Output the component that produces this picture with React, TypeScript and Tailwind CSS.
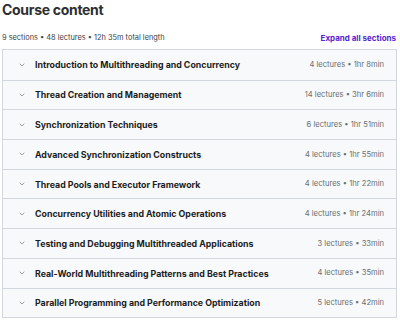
import React from 'react';
import { ChevronDown } from 'lucide-react';

const sections = [
  { title: 'Introduction to Multithreading and Concurrency', meta: '4 lectures • 1hr 8min' },
  { title: 'Thread Creation and Management', meta: '14 lectures • 3hr 6min' },
  { title: 'Synchronization Techniques', meta: '6 lectures • 1hr 51min' },
  { title: 'Advanced Synchronization Constructs', meta: '4 lectures • 1hr 55min' },
  { title: 'Thread Pools and Executor Framework', meta: '4 lectures • 1hr 22min' },
  { title: 'Concurrency Utilities and Atomic Operations', meta: '4 lectures • 1hr 24min' },
  { title: 'Testing and Debugging Multithreaded Applications', meta: '3 lectures • 33min' },
  { title: 'Real-World Multithreading Patterns and Best Practices', meta: '4 lectures • 35min' },
  { title: 'Parallel Programming and Performance Optimization', meta: '5 lectures • 42min' },
];

export default function App() {
  return (
    <div className="w-[400px] h-[323px] bg-white px-[2px] pt-[1px] text-[#2d2f31] font-['Inter',sans-serif]">
      <h2 className="text-[14px] font-bold leading-[18px] tracking-[-0.3px]">Course content</h2>
      <div className="flex items-center justify-between mt-[12px] h-[14px] pr-[2px]">
        <span className="text-[7.4px] text-[#3e4143]">9 sections • 48 lectures • 12h 35m total length</span>
        <button className="text-[8px] font-bold text-[#5624d0]">Expand all sections</button>
      </div>
      <div className="mt-[4px] w-[395px] border border-[#d1d7dc]">
        {sections.map((s, i) => (
          <div
            key={s.title}
            className={`flex items-center h-[29.7px] bg-[#f7f9fa] pl-[15px] pr-[12px] ${i > 0 ? 'border-t border-[#d1d7dc]' : ''}`}
          >
            <ChevronDown className="w-[8px] h-[8px] text-[#6a6f73]" strokeWidth={2} />
            <span className="ml-[9px] flex-1 text-[8.8px] font-bold text-[#1c1d1f]">{s.title}</span>
            <span className="text-[7.6px] text-[#6a6f73]">{s.meta}</span>
          </div>
        ))}
      </div>
    </div>
  );
}
